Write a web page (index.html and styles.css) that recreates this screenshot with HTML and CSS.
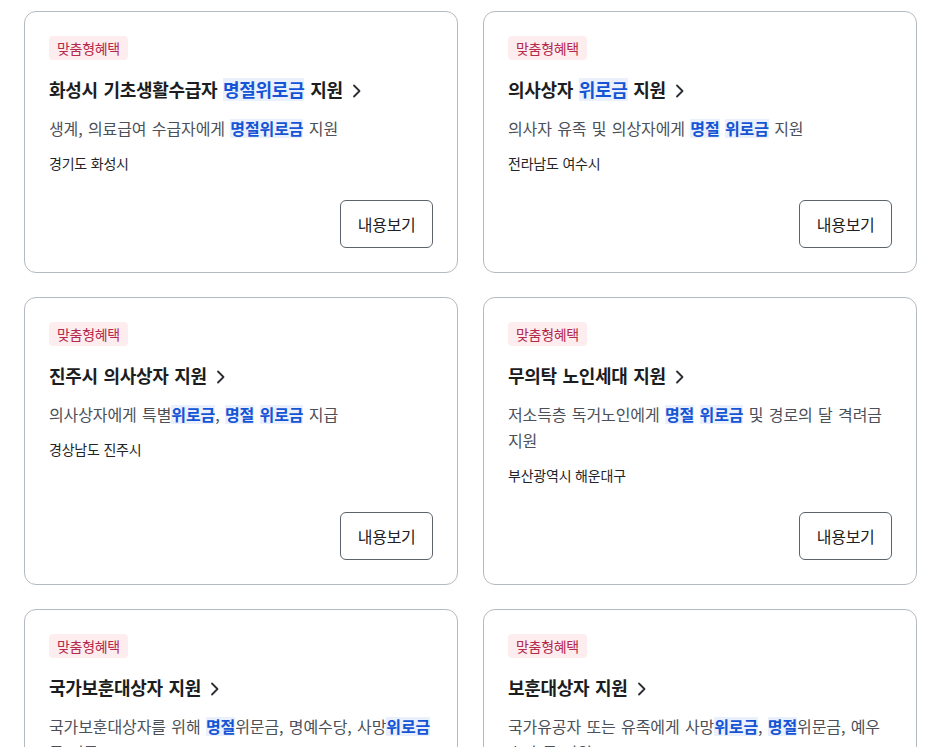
FILE: index.html
```html
<!DOCTYPE html>
<html lang="ko">
<head>
<meta charset="utf-8">
<title>맞춤형혜택</title>
<link rel="stylesheet" href="styles.css">
</head>
<body>
<div class="grid">
  <div class="card">
    <span class="badge">맞춤형혜택</span>
    <h3 class="title">화성시 기초생활수급자 <em class="hl">명절위로금</em> 지원<svg class="chev" viewBox="0 0 10 14" width="10" height="14"><path d="M2 1.5 L7.5 7 L2 12.5"/></svg></h3>
    <p class="desc">생계, 의료급여 수급자에게 <em class="hl">명절위로금</em> 지원</p>
    <p class="loc">경기도 화성시</p>
    <div class="actions"><button class="btn">내용보기</button></div>
  </div>
  <div class="card">
    <span class="badge">맞춤형혜택</span>
    <h3 class="title">의사상자 <em class="hl">위로금</em> 지원<svg class="chev" viewBox="0 0 10 14" width="10" height="14"><path d="M2 1.5 L7.5 7 L2 12.5"/></svg></h3>
    <p class="desc">의사자 유족 및 의상자에게 <em class="hl">명절</em> <em class="hl">위로금</em> 지원</p>
    <p class="loc">전라남도 여수시</p>
    <div class="actions"><button class="btn">내용보기</button></div>
  </div>
  <div class="card">
    <span class="badge">맞춤형혜택</span>
    <h3 class="title">진주시 의사상자 지원<svg class="chev" viewBox="0 0 10 14" width="10" height="14"><path d="M2 1.5 L7.5 7 L2 12.5"/></svg></h3>
    <p class="desc">의사상자에게 특별<em class="hl">위로금</em>, <em class="hl">명절</em> <em class="hl">위로금</em> 지급</p>
    <p class="loc">경상남도 진주시</p>
    <div class="actions"><button class="btn">내용보기</button></div>
  </div>
  <div class="card">
    <span class="badge">맞춤형혜택</span>
    <h3 class="title">무의탁 노인세대 지원<svg class="chev" viewBox="0 0 10 14" width="10" height="14"><path d="M2 1.5 L7.5 7 L2 12.5"/></svg></h3>
    <p class="desc">저소득층 독거노인에게 <em class="hl">명절</em> <em class="hl">위로금</em> 및 경로의 달 격려금 지원</p>
    <p class="loc">부산광역시 해운대구</p>
    <div class="actions"><button class="btn">내용보기</button></div>
  </div>
  <div class="card">
    <span class="badge">맞춤형혜택</span>
    <h3 class="title">국가보훈대상자 지원<svg class="chev" viewBox="0 0 10 14" width="10" height="14"><path d="M2 1.5 L7.5 7 L2 12.5"/></svg></h3>
    <p class="desc">국가보훈대상자를 위해 <em class="hl">명절</em>위문금, 명예수당, 사망<em class="hl">위로금</em> 등 지급</p>
    <p class="loc">국가보훈부</p>
    <div class="actions"><button class="btn">내용보기</button></div>
  </div>
  <div class="card">
    <span class="badge">맞춤형혜택</span>
    <h3 class="title">보훈대상자 지원<svg class="chev" viewBox="0 0 10 14" width="10" height="14"><path d="M2 1.5 L7.5 7 L2 12.5"/></svg></h3>
    <p class="desc">국가유공자 또는 유족에게 사망<em class="hl">위로금</em>, <em class="hl">명절</em>위문금, 예우수당 등 지원</p>
    <p class="loc">국가보훈부</p>
    <div class="actions"><button class="btn">내용보기</button></div>
  </div>
</div>
</body>
</html>
```

FILE: styles.css
```css
* { box-sizing: border-box; }
html, body { margin: 0; padding: 0; background: #ffffff; }
body {
  font-family: "Noto Sans CJK KR", "Noto Sans", sans-serif;
  color: #1e2124;
}
.grid {
  display: grid;
  grid-template-columns: 1fr 1fr;
  column-gap: 25px;
  row-gap: 24px;
  padding: 11px 24px 24px 24px;
}
.card {
  display: flex;
  flex-direction: column;
  align-items: flex-start;
  border: 1px solid #b4bac1;
  border-radius: 12px;
  padding: 24px 24px 24px 24px;
  background: #fff;
}
.badge {
  display: inline-block;
  height: 24px;
  line-height: 24px;
  padding: 0 8px;
  border-radius: 4px;
  background: #fdedef;
  color: #b42a4c;
  font-size: 14px;
  letter-spacing: -0.3px;
}
.title {
  margin: 16px 0 0 0;
  font-size: 18px;
  line-height: 26px;
  font-weight: 700;
  color: #1b1d21;
  letter-spacing: -0.3px;
  word-spacing: 1px;
}
.chev {
  margin-left: 9px;
  vertical-align: -1px;
  fill: none;
  stroke: #2a2d31;
  stroke-width: 1.8;
  stroke-linecap: round;
  stroke-linejoin: round;
}
.hl {
  font-style: normal;
  display: inline-block;
  line-height: 19px;
  background: #eaf1fd;
  color: #1554d4;
  font-weight: 700;
}
.title .hl { line-height: 23px; }
.desc {
  margin: 13px 0 0 0;
  font-size: 16px;
  line-height: 26px;
  color: #4b5059;
  letter-spacing: -0.1px;
  word-spacing: 1px;
}
.loc {
  margin: 12px 0 0 0;
  font-size: 14px;
  line-height: 20px;
  color: #222428;
  letter-spacing: -0.2px;
}
.actions {
  margin-top: auto;
  padding-top: 27px;
  align-self: stretch;
  display: flex;
  justify-content: flex-end;
}
.btn {
  height: 48px;
  padding: 0 16.5px;
  border: 1px solid #5d636c;
  border-radius: 6px;
  background: #fff;
  color: #1e2124;
  font-family: "Noto Sans CJK KR", "Noto Sans", sans-serif;
  font-size: 16px;
  letter-spacing: -0.3px;
}
```
